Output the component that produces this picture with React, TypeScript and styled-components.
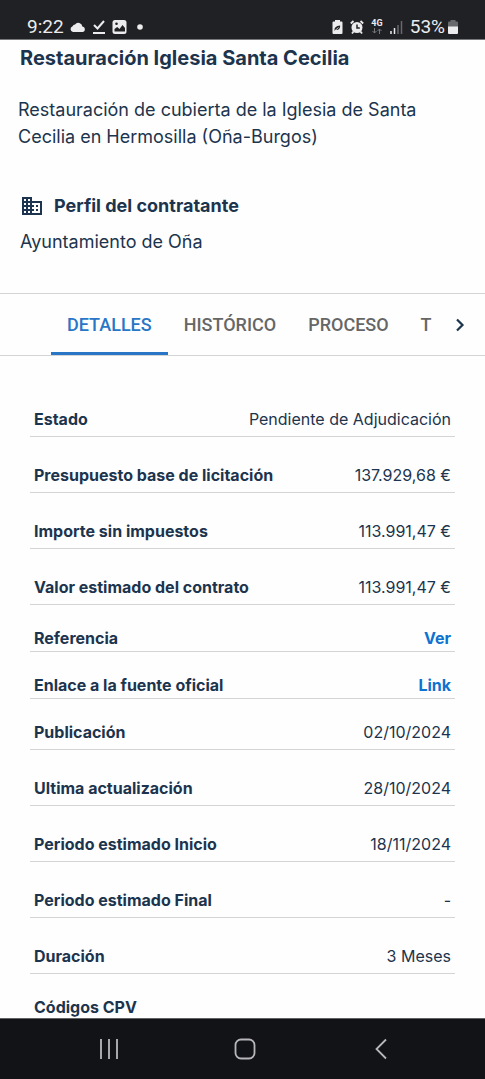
import React from "react";
import styled, { createGlobalStyle } from "styled-components";

const GlobalStyle = createGlobalStyle`
  *, *::before, *::after { box-sizing: border-box; }
  body {
    margin: 0;
    background: #fefefe;
    color: #1c344d;
    font-family: Inter, "Liberation Sans", sans-serif;
  }
  h1, h2, p, dl, dd { margin: 0; }
  button { font: inherit; border: 0; background: none; padding: 0; cursor: pointer; }
`;

const Screen = styled.div`
  display: flex;
  flex-direction: column;
  height: 100vh;
`;

const StatusBar = styled.header`
  display: flex;
  flex: none;
  justify-content: space-between;
  align-items: flex-end;
  height: 40px;
  padding: 0 27px 1px 27px;
  background: #202125;
  border-bottom: 1px solid #77787a;
  color: #ececee;
  font-family: Roboto, sans-serif;
  font-size: 19px;
  line-height: 22px;
`;

const StatusGroup = styled.div<{ $gap: number }>`
  display: flex;
  align-items: center;
  gap: ${(p) => p.$gap}px;
  svg { display: block; }
`;

const Main = styled.main`
  flex: 1;
  min-height: 0;
  overflow: hidden;
`;

const Intro = styled.section`
  padding: 6px 20px 39px;
`;

const Title = styled.h1`
  font-size: 20px;
  line-height: 24px;
  font-weight: 700;
`;

const Summary = styled.p`
  margin: 26px -2px 0;
  font-size: 18px;
  line-height: 27px;
  max-width: 420px;
`;

const ProfileHeading = styled.h2`
  display: flex;
  align-items: center;
  gap: 10px;
  margin-top: 44px;
  font-size: 18px;
  line-height: 24px;
  font-weight: 700;
`;

const Contractor = styled.p`
  margin-top: 12px;
  font-size: 18px;
  line-height: 24px;
`;

const TabStrip = styled.nav`
  display: flex;
  align-items: stretch;
  height: 63px;
  padding-left: 51px;
  border-top: 1px solid #d2d4d6;
  border-bottom: 1px solid #d2d4d6;
`;

const TabList = styled.div`
  display: flex;
  flex: 1;
  min-width: 0;
  overflow: hidden;
`;

const Tab = styled.button<{ $active?: boolean }>`
  flex: none;
  padding: 3px 16px 0;
  border-bottom: 3px solid ${(p) => (p.$active ? "#2a76c6" : "transparent")};
  color: ${(p) => (p.$active ? "#2a76c6" : "#666666")};
  font-family: Roboto, sans-serif;
  font-size: 18px;
  font-weight: 500;
  line-height: 24px;
`;

const ScrollButton = styled.button`
  display: grid;
  place-items: center;
  width: 50px;
  color: #1c344d;
`;

const Details = styled.dl`
  padding: 25px 30px 0;
`;

type Spacing = "regular" | "tight" | "compact";

const Row = styled.div<{ $spacing: Spacing }>`
  display: flex;
  justify-content: space-between;
  padding: ${(p) => (p.$spacing === "regular" ? 28 : 23)}px 4px ${(p) => (p.$spacing === "compact" ? 3 : 7)}px;
  border-bottom: 1px solid #d2d4d6;
  font-size: 16px;
  line-height: 20px;
`;

const Label = styled.dt`
  font-weight: 700;
`;

const Value = styled.dd`
  text-align: right;
`;

const ValueLink = styled.a`
  color: #0d72d0;
  font-weight: 700;
  text-decoration: none;
`;

const SystemNav = styled.footer`
  display: flex;
  flex: none;
  align-items: center;
  height: 61px;
  padding: 0 36px 0 41px;
  background: #121317;
  border-top: 1px solid #626367;
`;

const NavButton = styled.button`
  display: grid;
  flex: 1;
  place-items: center;
  height: 48px;
  color: #b8b8bb;
`;

interface Detail {
  label: string;
  value: string;
  href?: string;
  spacing?: Spacing;
}

const details: Detail[] = [
  { label: "Estado", value: "Pendiente de Adjudicación" },
  { label: "Presupuesto base de licitación", value: "137.929,68 €" },
  { label: "Importe sin impuestos", value: "113.991,47 €" },
  { label: "Valor estimado del contrato", value: "113.991,47 €" },
  { label: "Referencia", value: "Ver", href: "#referencia", spacing: "compact" },
  { label: "Enlace a la fuente oficial", value: "Link", href: "#fuente", spacing: "compact" },
  { label: "Publicación", value: "02/10/2024", spacing: "tight" },
  { label: "Ultima actualización", value: "28/10/2024" },
  { label: "Periodo estimado Inicio", value: "18/11/2024" },
  { label: "Periodo estimado Final", value: "-" },
  { label: "Duración", value: "3 Meses" },
  { label: "Códigos CPV", value: "", spacing: "tight" },
];

const CloudIcon = () => (
  <svg width="16" height="10" viewBox="0 0 16 10" fill="currentColor">
    <path d="M3 10a3 3 0 0 1-.4-5.800A2.600 2.600 0 0 1 5 2.400 4.200 4.200 0 0 1 12.400 4.400 2.900 2.900 0 0 1 13 10Z" />
  </svg>
);

const DoneIcon = () => (
  <svg width="14" height="16" viewBox="0 0 14 16" fill="none" stroke="currentColor" strokeWidth="2">
    <path d="M2 6l3.500 3.500L12 2M1 14h12" />
  </svg>
);

const PictureIcon = () => (
  <svg width="15" height="16" viewBox="0 0 15 16">
    <rect x=".5" y="1" width="14" height="14" rx="2.500" fill="currentColor" />
    <path d="M2.500 12.500V10l2.700-2 2.300 2 3-4 2.500 3v3.500Z" fill="#202125" />
    <circle cx="4.500" cy="4.800" r="1.300" fill="#202125" />
  </svg>
);

const LeafBatteryIcon = () => (
  <svg width="11" height="16" viewBox="0 0 11 16">
    <path d="M3 2.500V1h5v1.500h1.500q1 0 1 1V14q0 1-1 1h-8q-1 0-1-1V3.500q0-1 1-1Z" fill="currentColor" />
    <path d="M2.500 12q-.8-5 5.700-5.500 0 5-5 4.500" fill="#202125" />
    <path d="M3 11.500 6.500 8.500" stroke="#ececee" strokeWidth=".8" />
  </svg>
);

const AlarmIcon = () => (
  <svg width="14" height="16" viewBox="0 0 14 16">
    <circle cx="7" cy="8.500" r="5.500" fill="currentColor" />
    <path d="M.8 4.500 3.500 2M13.200 4.500 10.500 2M3.500 12.500 2 14.500M10.500 12.500l1.500 2" stroke="currentColor" strokeWidth="1.800" />
    <path d="M7 5.500V9h2.800" fill="none" stroke="#202125" strokeWidth="1.500" />
  </svg>
);

const NetworkIcon = () => (
  <svg width="12" height="16" viewBox="0 0 12 16">
    <text x="6" y="7" textAnchor="middle" fontFamily="Roboto, sans-serif" fontSize="9" fontWeight="700" fill="currentColor">4G</text>
    <path d="M3.500 9v5M1.500 12l2 2 2-2M8.500 15v-5M6.500 12l2-2 2 2" fill="none" stroke="#77787c" />
  </svg>
);

const SignalIcon = () => (
  <svg width="13" height="14" viewBox="0 0 13 14" strokeWidth="1.500">
    <path d="M1 11v3M4.500 8v6" stroke="#ececee" />
    <path d="M8 5v9M11.500 1v13" stroke="#68696d" />
  </svg>
);

const BatteryIcon = () => (
  <svg width="10" height="14" viewBox="0 0 10 14">
    <path d="M2.500 1.500V0h5v1.500H9q1 0 1 1V7H0V2.500q0-1 1-1Z" fill="#68696d" />
    <path d="M0 6.500h10V13q0 1-1 1H1q-1 0-1-1Z" fill="currentColor" />
  </svg>
);

const BusinessIcon = () => (
  <svg width="24" height="24" viewBox="0 0 24 24" fill="currentColor">
    <path d="M12 7V3H2v18h20V7H12zM6 19H4v-2h2v2zm0-4H4v-2h2v2zm0-4H4V9h2v2zm0-4H4V5h2v2zm4 12H8v-2h2v2zm0-4H8v-2h2v2zm0-4H8V9h2v2zm0-4H8V5h2v2zm10 12h-8v-2h2v-2h-2v-2h2v-2h-2V9h8v10zm-2-8h-2v2h2v-2zm0 4h-2v2h2v-2z" />
  </svg>
);

export default function App() {
  return (
    <Screen>
      <GlobalStyle />
      <StatusBar>
        <StatusGroup $gap={6}>
          <span>9:22</span>
          <CloudIcon />
          <DoneIcon />
          <PictureIcon />
          <svg width="14" height="6" viewBox="0 0 14 6" fill="currentColor">
            <circle cx="7" cy="3" r="2.800" />
          </svg>
        </StatusGroup>
        <StatusGroup $gap={7}>
          <LeafBatteryIcon />
          <AlarmIcon />
          <NetworkIcon />
          <SignalIcon />
          <StatusGroup $gap={3}>
            <span>53%</span>
            <BatteryIcon />
          </StatusGroup>
        </StatusGroup>
      </StatusBar>

      <Main>
        <Intro>
          <Title>Restauración Iglesia Santa Cecilia</Title>
          <Summary>Restauración de cubierta de la Iglesia de Santa Cecilia en Hermosilla (Oña-Burgos)</Summary>
          <ProfileHeading>
            <BusinessIcon />
            Perfil del contratante
          </ProfileHeading>
          <Contractor>Ayuntamiento de Oña</Contractor>
        </Intro>

        <TabStrip>
          <TabList role="tablist">
            <Tab role="tab" aria-selected="true" $active>DETALLES</Tab>
            <Tab role="tab" aria-selected="false">HISTÓRICO</Tab>
            <Tab role="tab" aria-selected="false">PROCESO</Tab>
            <Tab role="tab" aria-selected="false">T</Tab>
          </TabList>
          <ScrollButton aria-label="Más pestañas">
            <svg width="10" height="14" viewBox="0 0 10 14" fill="none" stroke="currentColor" strokeWidth="2.200">
              <path d="M2 1.500 7.500 7 2 12.500" />
            </svg>
          </ScrollButton>
        </TabStrip>

        <Details>
          {details.map(({ label, value, href, spacing = "regular" }) => (
            <Row key={label} $spacing={spacing}>
              <Label>{label}</Label>
              <Value>{href ? <ValueLink href={href}>{value}</ValueLink> : value}</Value>
            </Row>
          ))}
        </Details>
      </Main>

      <SystemNav>
        <NavButton aria-label="Recientes">
          <svg width="20" height="20" viewBox="0 0 20 20" stroke="currentColor" strokeWidth="1.800">
            <path d="M2 0v20M10 0v20M18 0v20" />
          </svg>
        </NavButton>
        <NavButton aria-label="Inicio">
          <svg width="22" height="22" viewBox="0 0 22 22" fill="none" stroke="currentColor" strokeWidth="1.800">
            <rect x="1.500" y="1.500" width="19" height="19" rx="5.500" />
          </svg>
        </NavButton>
        <NavButton aria-label="Atrás">
          <svg width="12" height="22" viewBox="0 0 12 22" fill="none" stroke="currentColor" strokeWidth="1.800">
            <path d="M11 1.500 1.500 11 11 20.500" />
          </svg>
        </NavButton>
      </SystemNav>
    </Screen>
  );
}
